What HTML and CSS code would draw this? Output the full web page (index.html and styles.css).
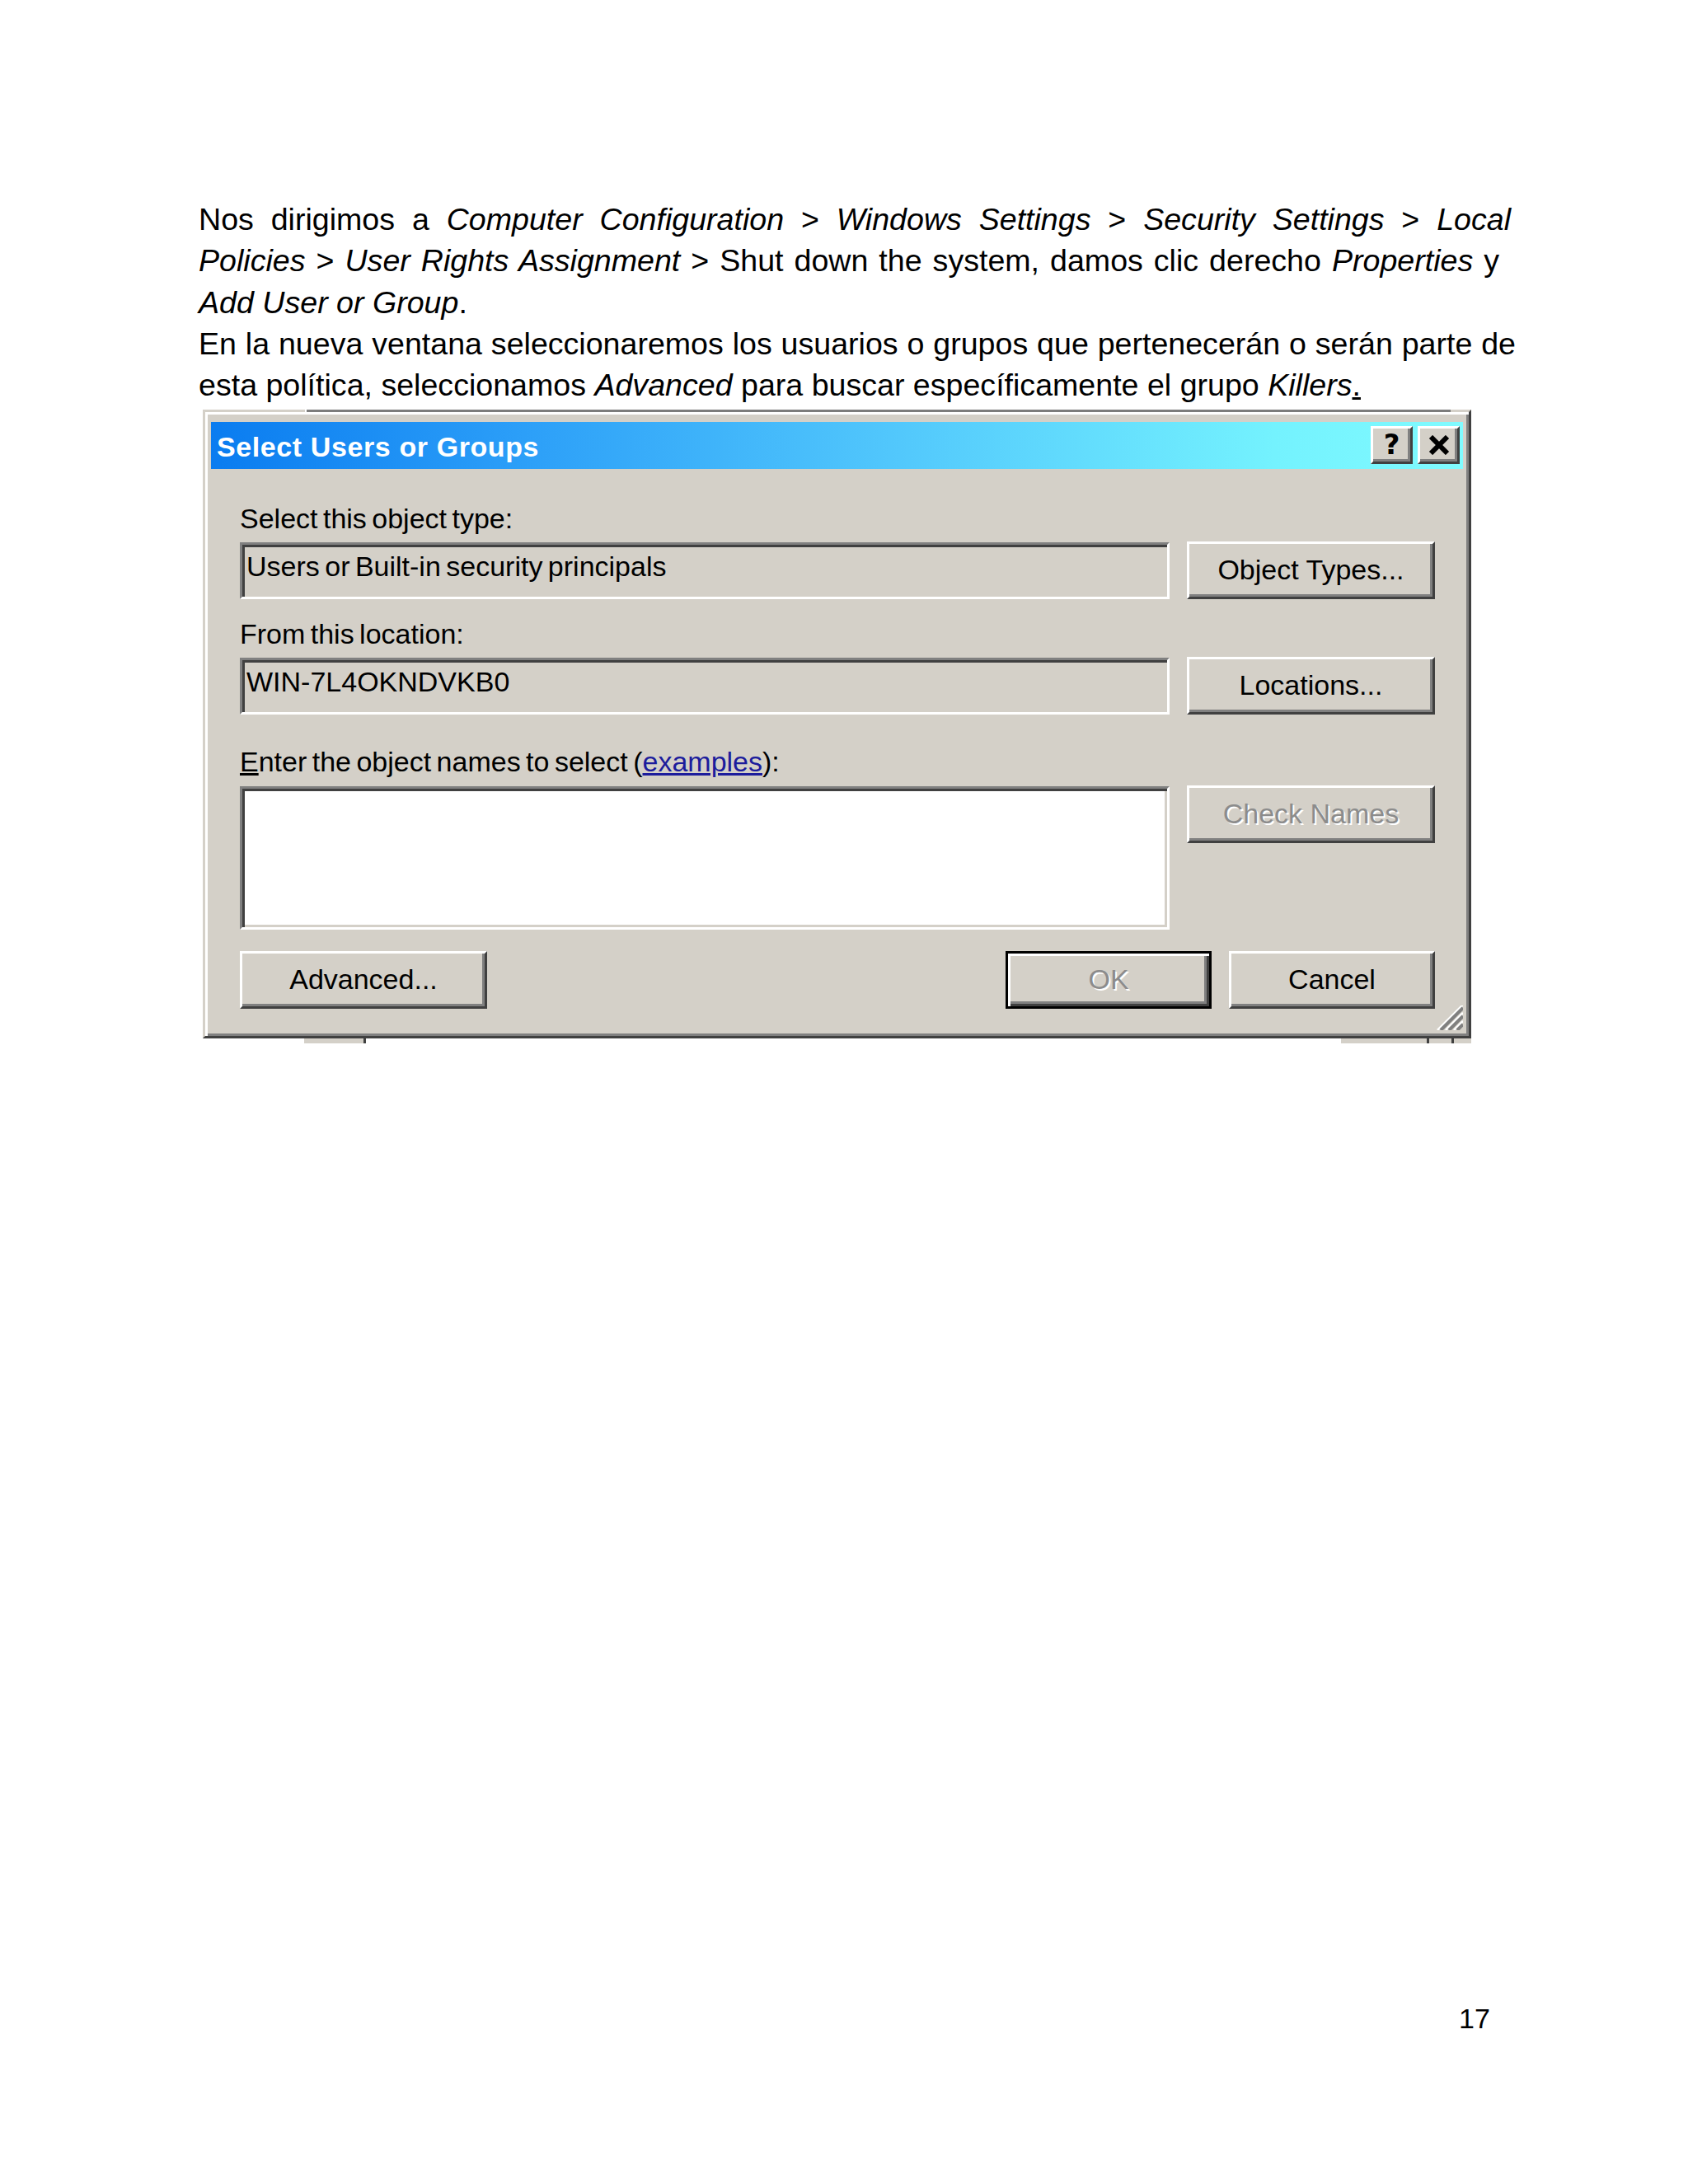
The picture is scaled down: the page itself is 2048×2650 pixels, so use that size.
FILE: index.html
```html
<!DOCTYPE html>
<html lang="es">
<head>
<meta charset="utf-8">
<title>Select Users or Groups</title>
<link rel="stylesheet" href="styles.css">
</head>
<body>
<div class="page">
  <div class="para">
    <div class="ln jl">Nos dirigimos a <i>Computer Configuration</i> &gt; <i>Windows Settings</i> &gt; <i>Security Settings</i> &gt; <i>Local</i></div>
    <div class="ln jl2"><i>Policies</i> &gt; <i>User Rights Assignment</i> &gt; Shut down the system, damos clic derecho <i>Properties</i> y</div>
    <div class="ln"><i>Add User or Group</i>.</div>
    <div class="ln jl4">En la nueva ventana seleccionaremos los usuarios o grupos que pertenecerán o serán parte de</div>
    <div class="ln">esta política, seleccionamos <i>Advanced</i> para buscar específicamente el grupo <i>Killers</i><u>.</u></div>
  </div>

  <div class="dialog">
    <div class="titlebar">
      <div class="title">Select Users or Groups</div>
      <div class="tbtns">
        <div class="tbtn q">?</div>
        <div class="tbtn">
          <svg width="26" height="24" viewBox="0 0 26 24"><path d="M3 2 L23 22 M23 2 L3 22" stroke="#000" stroke-width="6" fill="none"/></svg>
        </div>
      </div>
    </div>
    <div class="body">
      <div class="lbl">Select this object type:</div>
      <div class="row">
        <div class="tb ro">Users or Built-in security principals</div>
        <div class="btn">Object Types...</div>
      </div>
      <div class="lbl l2">From this location:</div>
      <div class="row">
        <div class="tb ro">WIN-7L4OKNDVKB0</div>
        <div class="btn">Locations...</div>
      </div>
      <div class="lbl l3"><u>E</u>nter the object names to select (<span class="link">examples</span>):</div>
      <div class="row">
        <div class="tb big"></div>
        <div class="btn dis">Check Names</div>
      </div>
      <div class="brow">
        <div class="btn adv">Advanced...</div>
        <div class="spacer"></div>
        <div class="btn def dis">OK</div>
        <div class="btn sm">Cancel</div>
      </div>
    </div>
    <svg class="grip" width="32" height="30" viewBox="0 0 32 30">
      <g stroke-linecap="butt">
        <line x1="1" y1="30" x2="32" y2="-1" stroke="#ffffff" stroke-width="2.5"/>
        <line x1="5" y1="30" x2="32" y2="3" stroke="#808080" stroke-width="4"/>
        <line x1="11" y1="30" x2="32" y2="9" stroke="#ffffff" stroke-width="2.5"/>
        <line x1="15" y1="30" x2="32" y2="13" stroke="#808080" stroke-width="4"/>
        <line x1="21" y1="30" x2="32" y2="19" stroke="#ffffff" stroke-width="2.5"/>
        <line x1="25" y1="30" x2="32" y2="23" stroke="#808080" stroke-width="4"/>
      </g>
    </svg>
    <div class="bits b1"></div>
    <div class="bits b2"></div>
  </div>

  <div class="pnum">17</div>
</div>
</body>
</html>
```

FILE: styles.css
```css
html, body {
  margin: 0;
  padding: 0;
  background: #ffffff;
}

.page {
  padding: 241px 0 0 241px;
  font-family: "Liberation Sans", Arial, sans-serif;
  color: #000;
}

.para .ln {
  font-size: 37.6px;
  line-height: 50.3px;
  white-space: nowrap;
}

.para .ln.jl,
.para .ln.jl2,
.para .ln.jl4 {
  text-align: justify;
  text-align-last: justify;
}

.para .ln.jl {
  width: 1592px;
}

.para .ln.jl2 {
  width: 1578px;
}

.para .ln.jl4 {
  width: 1598px;
}

.para u {
  text-decoration: underline;
}

/* Dialog */
.dialog {
  position: relative;
  box-sizing: border-box;
  width: 1539px;
  height: 763px;
  margin: 5px 0 0 5px;
  background: #d4d0c8;
  border: 3px solid;
  border-color: #d4d0c8 #404040 #404040 #d4d0c8;
  box-shadow: inset 3px 3px 0 #ffffff, inset -3px -3px 0 #808080;
  padding: 12px 7px 0 7px;
  font-family: "Liberation Sans", Arial, sans-serif;
}

.dialog::before {
  content: "";
  position: absolute;
  top: -3px;
  left: 121px;
  width: 1388px;
  height: 3px;
  background: #7d7d7d;
  border-left: 2px solid #ffffff;
}

.titlebar {
  display: flex;
  height: 57px;
  background: linear-gradient(to right, #0a7cf0 0%, #2c9ff8 25%, #52c8fc 55%, #74f2fe 85%, #80fbff 100%);
}

.title {
  flex: 1;
  padding-left: 7px;
  color: #ffffff;
  font-weight: bold;
  font-size: 34px;
  line-height: 60px;
  letter-spacing: 0.6px;
  white-space: nowrap;
}

.tbtns {
  display: flex;
  gap: 6px;
  padding: 5px 4px 0 0;
}

.tbtn {
  box-sizing: border-box;
  width: 51px;
  height: 46px;
  background: #d4d0c8;
  border: 3px solid;
  border-color: #ffffff #404040 #404040 #ffffff;
  box-shadow: inset -3px -3px 0 #808080;
  display: flex;
  align-items: center;
  justify-content: center;
}

.tbtn.q {
  font-family: "DejaVu Sans", sans-serif;
  font-weight: bold;
  font-size: 34px;
  line-height: 1;
  color: #000;
  padding-bottom: 2px;
}

.body {
  padding: 40px 34px 0 35px;
}

.lbl {
  font-size: 34px;
  line-height: 40px;
  height: 40px;
  margin-bottom: 9px;
  word-spacing: -3px;
  white-space: nowrap;
}

.lbl.l2 {
  margin-top: 22px;
}

.lbl.l3 {
  margin-top: 37px;
  margin-bottom: 10px;
}

.lbl u {
  text-decoration: underline;
}

.link {
  color: #1c1c9c;
  text-decoration: underline;
}

.row {
  display: flex;
  gap: 21px;
  align-items: flex-start;
}

.tb {
  box-sizing: border-box;
  width: 1128px;
  height: 69px;
  border: 3px solid;
  border-color: #808080 #ffffff #ffffff #808080;
  box-shadow: inset 3px 3px 0 #404040, inset -3px -3px 0 #d4d0c8;
  padding: 6px 0 0 5px;
  font-size: 34px;
  line-height: 40px;
  white-space: nowrap;
  word-spacing: -3px;
}

.tb.ro {
  background: #d4d0c8;
}

.tb.big {
  height: 174px;
  background: #ffffff;
}

.btn {
  box-sizing: border-box;
  width: 301px;
  height: 70px;
  margin-top: -1px;
  background: #d4d0c8;
  border: 3px solid;
  border-color: #ffffff #404040 #404040 #ffffff;
  box-shadow: inset -3px -3px 0 #808080;
  display: flex;
  align-items: center;
  justify-content: center;
  font-size: 34px;
  white-space: nowrap;
  padding-bottom: 2px;
}

.btn.dis {
  color: #8c8c8c;
  text-shadow: 2px 2px 0 #ffffff;
}

.brow {
  display: flex;
  margin-top: 26px;
  gap: 21px;
}

.brow .btn {
  margin-top: 0;
}

.btn.adv {
  width: 300px;
}

.spacer {
  flex: 1;
}

.btn.sm {
  width: 250px;
}

.btn.def {
  width: 250px;
  border: 3px solid #000000;
  box-shadow: inset 3px 3px 0 #ffffff, inset -3px -3px 0 #404040, inset -6px -6px 0 #808080;
}

.grip {
  position: absolute;
  right: 7px;
  bottom: 7px;
}

.bits {
  position: absolute;
  top: calc(100% + 3px);
  height: 6px;
  background: #d4d0c8;
}

.bits.b1 {
  left: 118px;
  width: 72px;
  border-left: 2px solid #ffffff;
  border-right: 3px solid #404040;
}

.bits.b2 {
  left: 1376px;
  width: 158px;
  border-left: 2px solid #ffffff;
  background: linear-gradient(to right, #d4d0c8 0 104px, #404040 104px 107px, #d4d0c8 107px 134px, #404040 134px 137px, #d4d0c8 137px);
}

.pnum {
  margin-top: 1164px;
  padding-left: 1529px;
  font-size: 34px;
  line-height: 50px;
}
```
